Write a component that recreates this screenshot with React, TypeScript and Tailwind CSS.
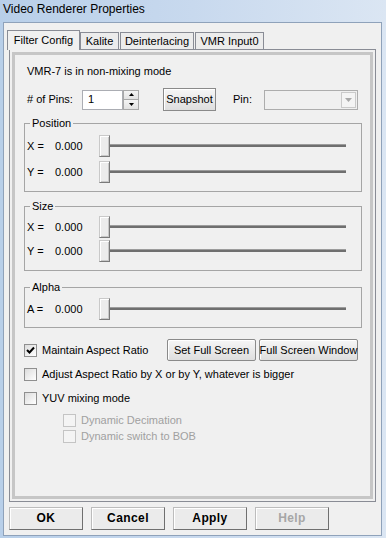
import type { ReactNode } from 'react';

function Tab({ label, active, w, ml }: { label: string; active?: boolean; w: string; ml: string }) {
  return (
    <div
      className={`${w} ${ml} flex items-center justify-center border border-b-0 border-[#898c95] ${
        active ? 'relative z-10 h-[20px] -mb-px bg-[#f0f0f0]' : 'h-[17px] bg-[#ececec]'
      }`}
    >
      {label}
    </div>
  );
}

function Slider({ axis }: { axis: string }) {
  return (
    <div className="flex h-[22px] items-center pl-[2px]">
      <span className="w-[28px]">{axis} =</span>
      <span className="w-[44px]">0.000</span>
      <div className="relative h-[22px] w-[251px]">
        <div className="absolute left-[2px] right-[4px] top-[9px] h-[3px] border-t border-[#9c9c9c] bg-[#6f6f6f]" />
        <div className="absolute left-0 top-0 h-[22px] w-[11px] border border-[#c9c9c9] border-b-[#7a7a7a] border-r-[#7a7a7a] bg-[#ececec] shadow-[inset_1px_1px_0_#ffffff,inset_-1px_-1px_0_#c8c8c8]" />
      </div>
    </div>
  );
}

function Group({ title, children, cls }: { title: string; children: ReactNode; cls: string }) {
  return (
    <fieldset className={`border border-[#a5a5a5] ${cls}`}>
      <legend className="ml-[5px] px-[2px] leading-[13px]">{title}</legend>
      {children}
    </fieldset>
  );
}

function Check({ label, checked, disabled, cls }: { label: string; checked?: boolean; disabled?: boolean; cls: string }) {
  return (
    <div className={`flex h-[16px] items-center ${cls}`}>
      <div
        className={`flex h-[13px] w-[13px] items-center justify-center border ${
          disabled ? 'border-[#c4c4c4] bg-[#f4f4f4]' : 'border-[#8f8f8f] bg-gradient-to-br from-[#dcdcdc] to-[#ffffff]'
        }`}
      >
        {checked && (
          <svg width="9" height="9" viewBox="0 0 9 9">
            <polyline points="1,4 3.5,6.5 8,1.5" fill="none" stroke="#000" strokeWidth="2" />
          </svg>
        )}
      </div>
      <span className={`ml-[5px] whitespace-nowrap ${disabled ? 'text-[#a0a0a0]' : ''}`}>{label}</span>
    </div>
  );
}

function Btn({ label, w, cls = '' }: { label: string; w: string; cls?: string }) {
  return (
    <div
      className={`${w} ${cls} flex h-[22px] items-center justify-center whitespace-nowrap rounded-[2px] border border-[#8a8a8a] bg-gradient-to-b from-[#f6f6f6] to-[#dedede] shadow-[inset_1px_1px_0_#ffffff]`}
    >
      {label}
    </div>
  );
}

function DlgBtn({ label, disabled }: { label: string; disabled?: boolean }) {
  return (
    <div
      className={`flex h-[23px] w-[74px] items-center justify-center border border-[#bcbcbc] border-b-[#6f6f6f] border-r-[#6f6f6f] bg-[#ebebeb] shadow-[inset_1px_1px_0_#ffffff] text-[12px] font-bold tracking-[0.4px] ${
        disabled ? 'text-[#a6a6a6]' : ''
      }`}
    >
      {label}
    </div>
  );
}

export default function App() {
  return (
    <div className="flex h-[538px] w-[386px] flex-col bg-gradient-to-r from-[#b8cfe9] via-[#c8d9ee] to-[#dbe6f3] font-['Liberation_Sans',Arial,sans-serif] text-[11px] leading-[13px] text-black">
      <div className="h-[22px] shrink-0 pl-[3px] pt-[2px] text-[12px] leading-[15px]">Video Renderer Properties</div>

      <div className="mb-[2px] ml-[3px] mr-[4px] flex flex-1 flex-col border border-[#8fa2ba] bg-[#f0f0f0] px-[5px] pb-[5px] pt-[7px]">
        {/* tabs */}
        <div className="flex items-end">
          <Tab label="Filter Config" active w="w-[73px]" ml="-ml-[2px]" />
          <Tab label="Kalite" w="w-[39px]" ml="ml-0" />
          <Tab label="Deinterlacing" w="w-[74px]" ml="ml-[1px]" />
          <Tab label="VMR Input0" w="w-[69px]" ml="ml-[1px]" />
        </div>

        {/* page */}
        <div className="flex-1 border border-[#898c95] p-[2px]">
          <div className="flex h-full flex-col border-[3px] border-[#c6c6c6] pl-[9px] pr-[8px] pt-[10px]">
            <div className="ml-[3px]">VMR-7 is in non-mixing mode</div>

            <div className="mt-[10px] flex h-[23px] items-center">
              <span className="ml-[3px] w-[55px]">{'# of Pins:'}</span>
              <div className="flex h-[20px] w-[41px] items-center border border-[#abadb3] bg-white pl-[5px]">1</div>
              <div className="flex h-[20px] w-[16px] flex-col">
                <div className="flex flex-1 items-center justify-center border border-[#a8a8a8] bg-gradient-to-b from-[#f4f4f4] to-[#e2e2e2]">
                  <svg width="5" height="3" viewBox="0 0 5 3"><polygon points="0,3 5,3 2.5,0" fill="#000" /></svg>
                </div>
                <div className="flex flex-1 items-center justify-center border border-t-0 border-[#a8a8a8] bg-gradient-to-b from-[#f4f4f4] to-[#e2e2e2]">
                  <svg width="5" height="3" viewBox="0 0 5 3"><polygon points="0,0 5,0 2.5,3" fill="#000" /></svg>
                </div>
              </div>
              <div className="ml-[24px] flex h-[23px] w-[53px] items-center justify-center border border-[#8a8a8a] bg-gradient-to-b from-[#f6f6f6] to-[#dedede] shadow-[inset_1px_1px_0_#ffffff]">
                Snapshot
              </div>
              <span className="ml-[17px] w-[31px]">Pin:</span>
              <div className="flex h-[20px] w-[94px] justify-end border border-[#adadad] bg-[#f0f0f0] p-[1px]">
                <div className="flex w-[15px] items-center justify-center border border-[#cacaca] bg-[#f4f4f4]">
                  <svg width="7" height="4" viewBox="0 0 7 4"><polygon points="0,0 7,0 3.5,4" fill="#a8a8a8" /></svg>
                </div>
              </div>
            </div>

            <Group title="Position" cls="mt-[6px] pb-[8px]">
              <div className="mt-[5px] flex flex-col gap-[4px]">
                <Slider axis="X" />
                <Slider axis="Y" />
              </div>
            </Group>

            <Group title="Size" cls="mt-[8px] pb-[8px]">
              <div className="mt-[3px] flex flex-col gap-[2px]">
                <Slider axis="X" />
                <Slider axis="Y" />
              </div>
            </Group>

            <Group title="Alpha" cls="mt-[10px] pb-[7px]">
              <div className="mt-[4px]">
                <Slider axis="A" />
              </div>
            </Group>

            <div className="mt-[11px] flex h-[22px] items-center">
              <Check label="Maintain Aspect Ratio" checked cls="" />
              <Btn label="Set Full Screen" w="w-[89px]" cls="ml-auto" />
              <Btn label="Full Screen Window" w="w-[99px]" cls="ml-[3px] mr-[4px]" />
            </div>
            <Check label="Adjust Aspect Ratio by X or by Y, whatever is bigger" cls="mt-[5px]" />
            <Check label="YUV mixing mode" cls="mt-[8px]" />
            <Check label="Dynamic Decimation" disabled cls="ml-[39px] mt-[6px]" />
            <Check label="Dynamic switch to BOB" disabled cls="ml-[39px]" />
          </div>
        </div>

        {/* dialog buttons */}
        <div className="mt-[5px] flex gap-[8px]">
          <DlgBtn label="OK" />
          <DlgBtn label="Cancel" />
          <DlgBtn label="Apply" />
          <DlgBtn label="Help" disabled />
        </div>
      </div>
    </div>
  );
}
